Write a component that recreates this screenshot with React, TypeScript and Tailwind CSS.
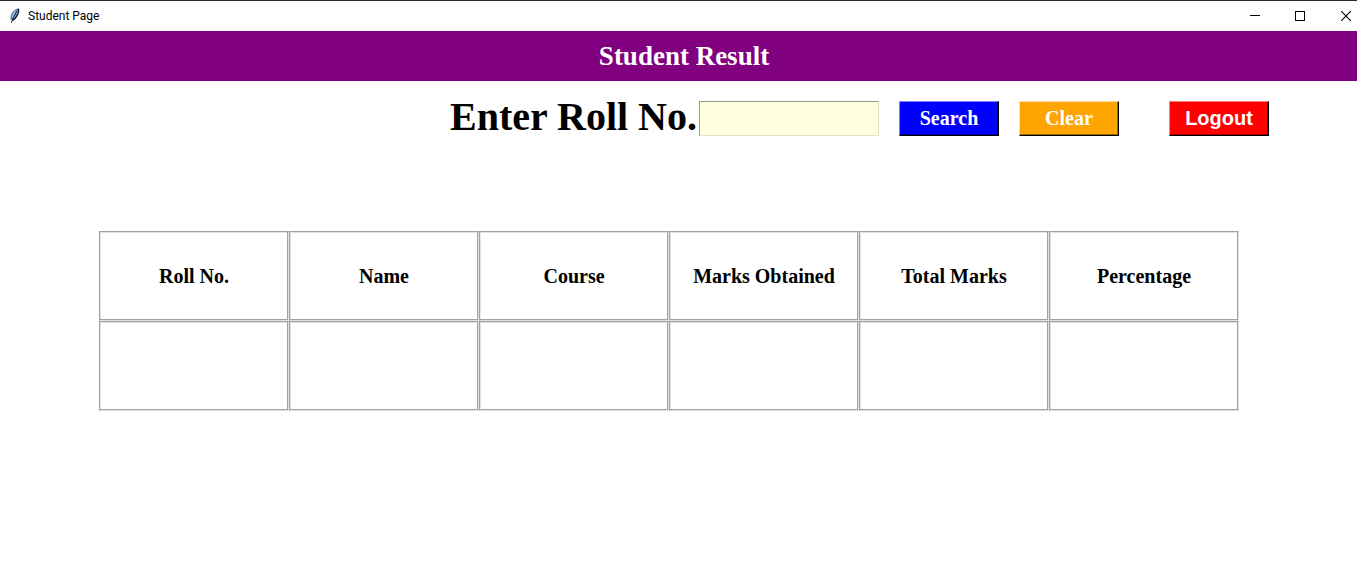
import { useState } from "react";

const columns = ["Roll No.", "Name", "Course", "Marks Obtained", "Total Marks", "Percentage"];

function FeatherIcon() {
  return (
    <svg width="16" height="16" viewBox="0 0 16 16" aria-hidden="true">
      <path d="M10.4 .7 7.4 1.9 4.6 4.6 3 8.4l0 3 1 1.4 2-1 2.2-3 1.6-4 .9-2.6z" fill="#6fa3dc" />
      <path d="M10.4 .7 7.4 1.9 4.6 4.6 3 8.4l0 3" fill="none" stroke="#4a5560" strokeWidth="0.8" />
      <path d="M10.5 .7 10.6 3.6 9.2 7.4 7 10.6 4.4 12.6" fill="none" stroke="#0b1016" strokeWidth="1.3" />
      <path d="M8.8 3 7 6.4 5 10.4 3.2 15" fill="none" stroke="#15202c" strokeWidth="0.9" />
      <path d="M7.6 3.2 5.6 6 4.4 9" fill="none" stroke="#a9cdf2" strokeWidth="1" />
    </svg>
  );
}

function TitleBar() {
  return (
    <div className="flex h-[31px] items-center border-t border-[#2b2b2b] bg-white">
      <div className="flex flex-1 items-center gap-1 pl-2">
        <FeatherIcon />
        <span className="font-['Roboto',sans-serif] text-[12px] leading-4 text-black">Student Page</span>
      </div>
      <button type="button" aria-label="Minimize" className="flex h-full w-[45px] items-center justify-center">
        <svg width="10" height="10" viewBox="0 0 10 10" shapeRendering="crispEdges">
          <path d="M0 4h10v1H0z" fill="#000" />
        </svg>
      </button>
      <button type="button" aria-label="Maximize" className="flex h-full w-[45px] items-center justify-center">
        <svg width="10" height="10" viewBox="0 0 10 10" shapeRendering="crispEdges">
          <path d="M.5.5h9v9h-9z" fill="none" stroke="#000" />
        </svg>
      </button>
      <button type="button" aria-label="Close" className="flex h-full w-[35px] items-center justify-end pr-1.5">
        <svg width="10" height="10" viewBox="0 0 10 10">
          <path d="M0 0l10 10M10 0L0 10" stroke="#000" strokeWidth="1.1" />
        </svg>
      </button>
    </div>
  );
}

const buttonBase =
  "h-[35px] w-[100px] border border-r-black border-b-black text-center text-[20px] leading-[33px] font-bold text-white";

const cell =
  "h-[90px] border border-t-[#a0a0a0] border-r-[#e3e3e3] border-b-[#e3e3e3] border-l-[#a0a0a0] p-0 text-center text-[20px] leading-6 font-bold whitespace-nowrap shadow-[inset_-1px_-1px_0_#a0a0a0,inset_1px_1px_0_#e3e3e3]";

export default function App() {
  const [roll, setRoll] = useState("");

  return (
    <div className="min-h-screen bg-white font-['Liberation_Serif',serif] text-black">
      <TitleBar />
      <h1 className="h-[50px] bg-[#800080] pl-[11px] text-center text-[27px] leading-[50px] font-bold text-white">
        Student Result
      </h1>

      <form
        className="flex items-center justify-end pt-5 pr-[88px]"
        onSubmit={(event) => event.preventDefault()}
      >
        <label htmlFor="roll" className="pr-0.5 pb-1 text-[40px] leading-[31px] font-bold">
          Enter Roll No.
        </label>
        <input
          id="roll"
          type="text"
          value={roll}
          onChange={(event) => setRoll(event.target.value)}
          className="h-[35px] w-[180px] border border-t-[#9c9c8c] border-r-[#e3e3c8] border-b-[#e3e3c8] border-l-[#9c9c8c] bg-[#ffffe0] px-1 text-[20px] outline-none"
        />
        <button
          type="submit"
          className={`${buttonBase} ml-5 border-t-[#7f7fff] border-l-[#7f7fff] bg-[#0000ff] shadow-[inset_-1px_-1px_0_#000099]`}
        >
          Search
        </button>
        <button
          type="button"
          onClick={() => setRoll("")}
          className={`${buttonBase} ml-5 border-t-[#ffdc96] border-l-[#ffdc96] bg-[#ffa500] shadow-[inset_-1px_-1px_0_#996300]`}
        >
          Clear
        </button>
        <button
          type="button"
          className={`${buttonBase} ml-[50px] border-t-[#ff7f7f] border-l-[#ff7f7f] bg-[#ff0000] font-['Liberation_Sans',sans-serif] shadow-[inset_-1px_-1px_0_#990000]`}
        >
          Logout
        </button>
      </form>

      <div className="pt-[95px] pr-[118px] pl-[99px]">
        <table className="w-full table-fixed border-separate border-spacing-0">
          <thead>
            <tr>
              {columns.map((name) => (
                <th key={name} scope="col" className={cell}>
                  {name}
                </th>
              ))}
            </tr>
          </thead>
          <tbody>
            <tr>
              {columns.map((name) => (
                <td key={name} className={cell} />
              ))}
            </tr>
          </tbody>
        </table>
      </div>
    </div>
  );
}
